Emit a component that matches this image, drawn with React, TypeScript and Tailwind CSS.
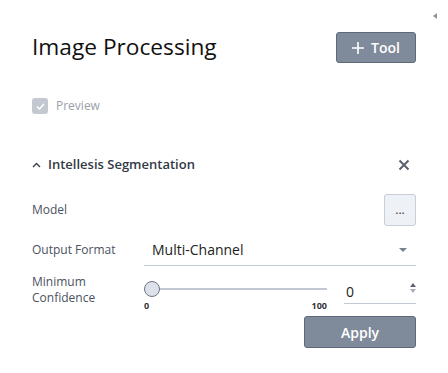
import { useState } from "react";

const FONT = { fontFamily: '"Open Sans", "Noto Sans", sans-serif' };

function Chevron() {
  return (
    <svg width="9" height="6" viewBox="0 0 9 6" className="text-[#3a4250]">
      <path d="M1 5 L4.5 1.5 L8 5" fill="none" stroke="currentColor" strokeWidth="1.4" />
    </svg>
  );
}

function CloseIcon() {
  return (
    <svg width="12" height="12" viewBox="0 0 12 12" className="text-[#5a6270]">
      <path d="M1.5 1.5 L10.5 10.5 M10.5 1.5 L1.5 10.5" stroke="currentColor" strokeWidth="2" />
    </svg>
  );
}

export default function App() {
  const [value] = useState(0);

  return (
    <div className="relative h-[373px] w-[448px] overflow-hidden bg-white" style={FONT}>
      <div className="absolute right-[11px] top-[13px] h-0 w-0 border-y-[3.5px] border-r-[4px] border-y-transparent border-r-[#8a94a3]" />

      <div className="flex flex-col px-8 pt-8">
        <div className="flex h-[31px] items-center justify-between">
          <h1 className="text-[22.7px] leading-none text-[#111]">Image Processing</h1>
          <button className="flex h-[31px] w-[80px] items-center justify-center gap-[7px] rounded-[3px] border border-[#5f6978] bg-[#7f8a9b] text-[14px] font-semibold text-white">
            <svg width="12" height="12" viewBox="0 0 12 12">
              <path d="M6 0 V12 M0 6 H12" stroke="white" strokeWidth="1.6" />
            </svg>
            Tool
          </button>
        </div>

        <label className="mt-[34px] flex items-center gap-2">
          <span className="flex h-4 w-4 items-center justify-center rounded-[3px] bg-[#c3c8d1]">
            <svg width="9" height="7" viewBox="0 0 9 7">
              <path d="M1 3.5 L3.5 6 L8 1" fill="none" stroke="white" strokeWidth="1.5" />
            </svg>
          </span>
          <span className="text-[12px] text-[#9aa0aa]">Preview</span>
        </label>

        <div className="mt-[40px] flex h-[20px] items-center justify-between">
          <div className="flex items-center gap-[7px]">
            <Chevron />
            <span className="text-[13px] font-semibold text-[#333a45]">Intellesis Segmentation</span>
          </div>
          <span className="mr-[6px]">
            <CloseIcon />
          </span>
        </div>

        <div className="mt-[19px] flex h-[32px] items-center justify-between">
          <span className="text-[12px] text-[#4a5260]">Model</span>
          <button className="flex h-[32px] w-[32px] items-center justify-center rounded-[3px] border border-[#c8cdd6] bg-[#eef1f5] text-[12px] leading-none text-[#333]">
            ...
          </button>
        </div>

        <div className="mt-[8px] flex items-center">
          <span className="w-[112px] text-[12px] text-[#4a5260]">Output Format</span>
          <div className="flex h-[32px] flex-1 items-center justify-between border-b border-[#c3c9d3] pl-2 pr-[9px]">
            <span className="text-[14px] text-[#222]">Multi-Channel</span>
            <span className="h-0 w-0 border-x-[4px] border-t-[4px] border-x-transparent border-t-[#7a8291]" />
          </div>
        </div>

        <div className="mt-[6px] flex items-start">
          <span className="w-[112px] pt-[2px] text-[12px] leading-[16px] text-[#4a5260]">
            Minimum
            <br />
            Confidence
          </span>
          <div className="flex w-[183px] flex-col pt-[9px]">
            <div className="relative h-[16px]">
              <div className="absolute left-[8px] right-0 top-[7px] h-[2px] bg-[#c3c9d3]" />
              <div className="absolute left-0 top-0 h-[16px] w-[16px] rounded-full border border-[#6d7583] bg-[#dde2ea]" />
            </div>
            <div className="mt-[4px] flex justify-between text-[9px] font-bold leading-none text-[#333]">
              <span>0</span>
              <span>100</span>
            </div>
          </div>
          <div className="ml-[17px] flex h-[32px] flex-1 items-center justify-between border-b border-[#c3c9d3] pl-[2px]">
            <span className="pt-[8px] text-[14px] text-[#222]">{value}</span>
            <span className="flex flex-col items-center gap-[2px]">
              <span className="h-0 w-0 border-x-[3px] border-b-[4px] border-x-transparent border-b-[#5a6270]" />
              <span className="h-0 w-0 border-x-[3px] border-t-[4px] border-x-transparent border-t-[#a8afba]" />
            </span>
          </div>
        </div>

        <div className="mt-[6px] flex justify-end">
          <button className="h-[32px] w-[112px] rounded-[3px] border border-[#5f6978] bg-[#7f8a9b] text-[14px] font-semibold text-white">
            Apply
          </button>
        </div>
      </div>
    </div>
  );
}
